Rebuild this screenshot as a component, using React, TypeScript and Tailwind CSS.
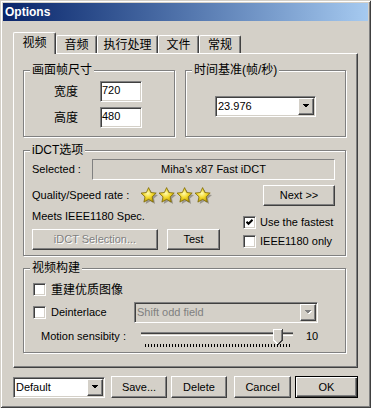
import type { ReactNode } from "react";

// classic win2k bevels
const raised =
  "border border-t-white border-l-white border-r-[#404040] border-b-[#404040] shadow-[inset_-1px_-1px_#808080]";
const sunken =
  "border border-t-[#808080] border-l-[#808080] border-r-white border-b-white shadow-[inset_1px_1px_#404040,inset_-1px_-1px_#d4d0c8]";
const group =
  "border border-[#808080] shadow-[inset_1px_1px_#fff,1px_1px_#fff]";
const legend = "ml-[6px] px-[2px] bg-[#d4d0c8] text-[12px] leading-[14px]";

function Arrow({ disabled }: { disabled?: boolean }) {
  return (
    <svg width="8" height="5" viewBox="0 0 8 5" shapeRendering="crispEdges">
      {disabled && <path d="M1 1h7L4.5 4.5z" fill="#fff" />}
      <path d="M0 0h7L3.5 3.5z" fill={disabled ? "#808080" : "#000"} />
    </svg>
  );
}

function Combo({
  value,
  className,
  disabled,
}: {
  value: string;
  className: string;
  disabled?: boolean;
}) {
  return (
    <div
      className={`flex h-[21px] ${sunken} ${disabled ? "bg-[#d4d0c8]" : "bg-white"} ${className}`}
    >
      <div
        className={`flex-1 pl-[2px] pt-[1px] text-[11px] leading-[16px] ${
          disabled ? "text-[#808080]" : ""
        }`}
      >
        {value}
      </div>
      <div className={`w-[16px] h-[17px] m-px ml-0 mr-px flex items-center justify-center bg-[#d4d0c8] ${raised}`}>
        <Arrow disabled={disabled} />
      </div>
    </div>
  );
}

function Button({
  children,
  className,
  disabled,
  isDefault,
}: {
  children: ReactNode;
  className: string;
  disabled?: boolean;
  isDefault?: boolean;
}) {
  const face = isDefault
    ? "border border-black shadow-[inset_1px_1px_#fff,inset_-1px_-1px_#404040,inset_-2px_-2px_#808080]"
    : raised;
  return (
    <div
      className={`flex items-center justify-center text-[11px] ${face} ${
        disabled ? "text-[#808080] [text-shadow:1px_1px_0_#fff]" : ""
      } ${className}`}
    >
      {children}
    </div>
  );
}

function Check({ checked }: { checked?: boolean }) {
  return (
    <div className={`w-[13px] h-[13px] shrink-0 bg-white flex items-center justify-center ${sunken}`}>
      {checked && (
        <svg width="7" height="7" viewBox="0 0 7 7">
          <path d="M0.5 2.8L2.5 4.8L6.5 0.8" fill="none" stroke="#000" strokeWidth="2" />
        </svg>
      )}
    </div>
  );
}

function Edit({ value }: { value: string }) {
  return (
    <div className={`w-[42px] h-[21px] bg-white pl-px pt-[1px] text-[11px] leading-[15px] ${sunken}`}>
      {value}
    </div>
  );
}

function Star() {
  const d =
    "M8 0L10.2 4.9L15.6 5.5L11.6 9.2L12.7 14.5L8 11.8L3.3 14.5L4.4 9.2L0.4 5.5L5.8 4.9Z";
  return (
    <svg width="18" height="18" viewBox="0 0 18 18">
      <defs>
        <radialGradient id="starfill" cx="0.45" cy="0.4" r="0.6">
          <stop offset="0" stopColor="#fffbb0" />
          <stop offset="0.5" stopColor="#f3d82a" />
          <stop offset="1" stopColor="#b89a08" />
        </radialGradient>
      </defs>
      <path d={d} transform="translate(2.4 2.4)" fill="#9a968e" />
      <path d={d} transform="translate(0.6 0.6)" fill="url(#starfill)" stroke="#7d6a06" strokeWidth="0.8" />
    </svg>
  );
}

function Slider() {
  return (
    <div className="relative w-[152px] h-[24px]">
      <div className="mt-[7px] h-[4px] border-t border-[#808080] border-b border-b-white shadow-[inset_0_1px_#404040]" />
      <div className="mt-[8px] ml-[4px] w-[147px] h-[3px] bg-[repeating-linear-gradient(90deg,#000_0_1px,transparent_1px_3px)]" />
      <svg className="absolute left-[132px] top-[4px]" width="10" height="16" viewBox="0 0 10 16" shapeRendering="crispEdges">
        <polygon points="0,0 9,0 9,11 4.5,15.5 0,11" fill="#d4d0c8" />
        <polyline points="0.5,11 0.5,0.5 8.5,0.5" fill="none" stroke="#fff" />
        <polyline points="8.5,1 8.5,11" fill="none" stroke="#808080" />
        <polyline points="9.5,0 9.5,11" fill="none" stroke="#404040" />
        <line x1="0.5" y1="11" x2="4.5" y2="15" stroke="#fff" />
        <line x1="9.5" y1="11" x2="5" y2="15.5" stroke="#404040" />
      </svg>
    </div>
  );
}

const tabs = [
  { label: "视频", w: "w-[43px]" },
  { label: "音频", w: "w-[41px]" },
  { label: "执行处理", w: "w-[61px]" },
  { label: "文件", w: "w-[41px]" },
  { label: "常规", w: "w-[42px]" },
];

export default function App() {
  return (
    <div className="w-[371px] h-[408px] bg-[#d4d0c8] p-[3px] flex flex-col text-black font-['Liberation_Sans','Noto_Sans_CJK_SC',sans-serif] shadow-[inset_1px_1px_#d4d0c8,inset_-1px_-1px_#404040,inset_2px_2px_#fff,inset_-2px_-2px_#808080]">
      <div className="h-[18px] flex items-center px-[2px] bg-linear-to-r from-[#0a246a] to-[#a6caf0]">
        <span className="text-white font-bold text-[12px]">Options</span>
      </div>

      <div className="px-[10px] pt-[11px]">
        {/* tabs */}
        <div className="flex items-end h-[21px]">
          {tabs.map((t, i) => (
            <div
              key={t.label}
              className={`${t.w} flex items-center justify-center text-[12px] bg-[#d4d0c8] border-t border-l border-white border-r border-r-[#404040] shadow-[inset_-1px_0_#808080] rounded-t-[2px] ${
                i === 0 ? "h-[22px] -mb-px relative z-10 pb-[2px]" : "h-[18px]"
              }`}
            >
              {t.label}
            </div>
          ))}
        </div>

        {/* tab page */}
        <div className="w-[345px] h-[315px] border border-t-white border-l-white border-r-[#404040] border-b-[#404040] shadow-[inset_-1px_-1px_#808080] pt-[9px] pl-[9px]">
          <div className="flex gap-[10px]">
            <fieldset className={`${group} w-[152px] h-[74px]`}>
              <legend className={legend}>画面帧尺寸</legend>
              <div className="pl-[30px] pt-[4px] flex flex-col gap-[5px]">
                <div className="flex items-center">
                  <span className="w-[46px] text-[12px]">宽度</span>
                  <Edit value="720" />
                </div>
                <div className="flex items-center">
                  <span className="w-[46px] text-[12px]">高度</span>
                  <Edit value="480" />
                </div>
              </div>
            </fieldset>

            <fieldset className={`${group} w-[161px] h-[74px]`}>
              <legend className={legend}>时间基准(帧/秒)</legend>
              <div className="flex justify-center pt-[19px]">
                <Combo value="23.976" className="w-[101px]" />
              </div>
            </fieldset>
          </div>

          <fieldset className={`${group} w-[323px] h-[113px] mt-[6px]`}>
            <legend className={legend}>iDCT选项</legend>
            <div className="pl-[8px] pr-[10px] pt-[2px] text-[11px]">
              <div className="flex items-center h-[21px]">
                <span className="w-[60px]">Selected :</span>
                <div className="flex-1 h-[21px] flex items-center justify-center border border-t-[#808080] border-l-[#808080] border-r-white border-b-white">
                  Miha's x87 Fast iDCT
                </div>
              </div>
              <div className="flex items-center h-[21px] mt-[5px]">
                <span className="w-[108px]">Quality/Speed rate :</span>
                <div className="flex">
                  <Star />
                  <Star />
                  <Star />
                  <Star />
                </div>
                <Button className="ml-auto w-[72px] h-[21px]">Next &gt;&gt;</Button>
              </div>
              <div className="flex">
                <div className="flex flex-col">
                  <span className="mt-[3px] leading-[14px]">Meets IEEE1180 Spec.</span>
                  <div className="flex mt-[6px]">
                    <Button disabled className="w-[126px] h-[21px]">iDCT Selection...</Button>
                    <Button className="ml-[9px] w-[53px] h-[21px]">Test</Button>
                  </div>
                </div>
                <div className="ml-auto w-[92px] flex flex-col">
                  <div className="mt-[10px] h-[13px] flex items-center gap-[4px]">
                    <Check checked />
                    <span>Use the fastest</span>
                  </div>
                  <div className="mt-[6px] h-[13px] flex items-center gap-[4px]">
                    <Check />
                    <span>IEEE1180 only</span>
                  </div>
                </div>
              </div>
            </div>
          </fieldset>

          <fieldset className={`${group} w-[323px] h-[92px] mt-[5px]`}>
            <legend className={legend}>视频构建</legend>
            <div className="pl-[9px] pt-[6px] text-[11px]">
              <div className="flex items-center h-[17px] gap-[5px]">
                <Check />
                <span className="text-[12px]">重建优质图像</span>
              </div>
              <div className="flex items-center h-[21px] mt-[4px]">
                <Check />
                <span className="ml-[5px] w-[83px]">Deinterlace</span>
                <Combo value="Shift odd field" className="w-[184px]" disabled />
              </div>
              <div className="flex items-start h-[24px] mt-[2px]">
                <span className="ml-[8px] w-[100px] mt-[4px] leading-[14px]">Motion sensibity :</span>
                <Slider />
                <span className="ml-[13px] mt-[4px] leading-[14px]">10</span>
              </div>
            </div>
          </fieldset>
        </div>

        {/* footer */}
        <div className="mt-[8px] flex items-center h-[22px]">
          <Combo value="Default" className="w-[92px]" />
          <Button className="ml-[6px] w-[56px] h-[22px]">Save...</Button>
          <Button className="ml-[4px] w-[56px] h-[22px]">Delete</Button>
          <Button className="ml-[7px] w-[57px] h-[22px]">Cancel</Button>
          <Button isDefault className="ml-[4px] w-[63px] h-[22px]">OK</Button>
        </div>
      </div>
    </div>
  );
}
